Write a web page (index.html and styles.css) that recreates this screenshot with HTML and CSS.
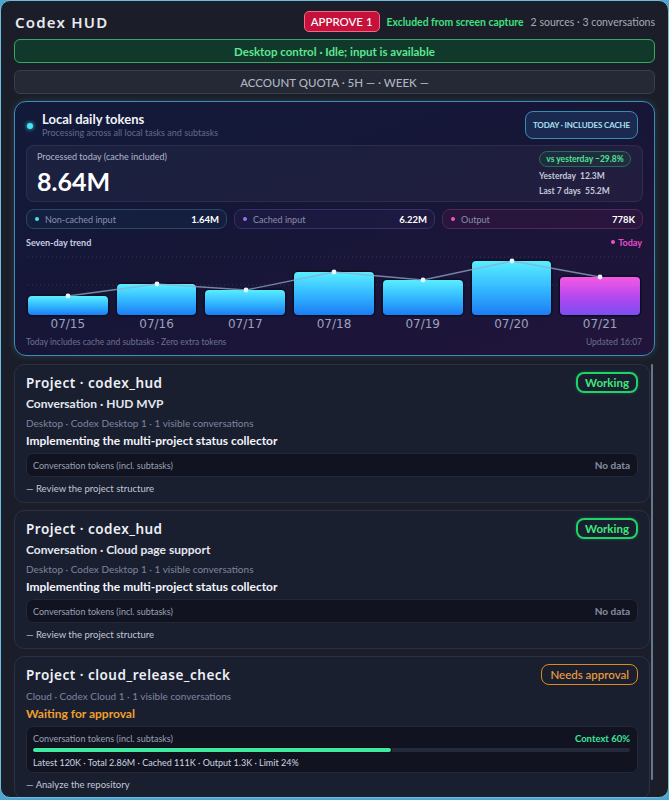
FILE: index.html
```html
<!DOCTYPE html>
<html>
<head>
<meta charset="utf-8">
<title>Codex HUD</title>
<link rel="stylesheet" href="styles.css">
</head>
<body>
<div class="window">
  <header class="top">
    <h1 class="brand">Codex HUD</h1>
    <div class="top-right">
      <span class="approve">APPROVE 1</span>
      <span class="excluded">Excluded from screen capture</span>
      <span class="sources">2 sources · 3 conversations</span>
    </div>
  </header>

  <div class="bar bar-green">Desktop control · Idle; input is available</div>
  <div class="bar bar-quota">ACCOUNT QUOTA · 5H — · WEEK —</div>

  <section class="tokens">
    <div class="tk-head">
      <span class="tk-dot"></span>
      <div class="tk-titles">
        <div class="tk-title">Local daily tokens</div>
        <div class="tk-sub">Processing across all local tasks and subtasks</div>
      </div>
      <span class="tk-badge">TODAY · INCLUDES CACHE</span>
    </div>

    <div class="tk-main">
      <div class="tk-left">
        <div class="tk-label">Processed today (cache included)</div>
        <div class="tk-big">8.64M</div>
      </div>
      <div class="tk-side">
        <span class="vs">vs yesterday −29.8%</span>
        <div class="side-line">Yesterday&nbsp; 12.3M</div>
        <div class="side-line">Last 7 days&nbsp; 55.2M</div>
      </div>
    </div>

    <div class="tk-stats">
      <div class="stat stat-cyan"><span class="sdot"></span><span class="slabel">Non-cached input</span><span class="sval">1.64M</span></div>
      <div class="stat stat-purple"><span class="sdot"></span><span class="slabel">Cached input</span><span class="sval">6.22M</span></div>
      <div class="stat stat-pink"><span class="sdot"></span><span class="slabel">Output</span><span class="sval">778K</span></div>
    </div>

    <div class="trend-row">
      <span class="trend-title">Seven-day trend</span>
      <span class="today"><span class="today-dot"></span>Today</span>
    </div>

    <div class="chart">
      <div class="bars">
        <div class="bcol"><div class="b" style="height:19px"></div></div>
        <div class="bcol"><div class="b" style="height:31px"></div></div>
        <div class="bcol"><div class="b" style="height:25px"></div></div>
        <div class="bcol"><div class="b" style="height:43px"></div></div>
        <div class="bcol"><div class="b" style="height:35px"></div></div>
        <div class="bcol"><div class="b" style="height:54px"></div></div>
        <div class="bcol"><div class="b b-today" style="height:38px"></div></div>
      </div>
      <svg class="overlay" viewBox="0 0 612 60" width="612" height="60">
        <line x1="0" y1="2" x2="612" y2="2" stroke="#ffffff" stroke-opacity="0.13" stroke-dasharray="1 3"/>
        <line x1="0" y1="30" x2="612" y2="30" stroke="#ffffff" stroke-opacity="0.13" stroke-dasharray="1 3"/>
        <polyline points="40,41 129,29 218,35 306,17 395,25 484,6 572,22" fill="none" stroke="#93a9cc" stroke-opacity="0.75" stroke-width="1.4"/>
        <g fill="#e4f8ff">
          <circle cx="40" cy="41" r="2.4"/>
          <circle cx="129" cy="29" r="2.4"/>
          <circle cx="218" cy="35" r="2.4"/>
          <circle cx="306" cy="17" r="2.4"/>
          <circle cx="395" cy="25" r="2.4"/>
          <circle cx="484" cy="6" r="2.4"/>
          <circle cx="572" cy="22" r="2.4"/>
        </g>
      </svg>
    </div>
    <div class="days">
      <span>07/15</span><span>07/16</span><span>07/17</span><span>07/18</span><span>07/19</span><span>07/20</span><span>07/21</span>
    </div>

    <div class="tk-foot">
      <span>Today includes cache and subtasks · Zero extra tokens</span>
      <span>Updated 16:07</span>
    </div>
  </section>

  <div class="list">
    <div class="cards">
      <article class="card">
        <div class="card-head">
          <h2 class="card-title">Project · codex_hud</h2>
          <span class="pill pill-working">Working</span>
        </div>
        <div class="conv">Conversation · HUD MVP</div>
        <div class="meta">Desktop · Codex Desktop 1 · 1 visible conversations</div>
        <div class="task">Implementing the multi-project status collector</div>
        <div class="tbox">
          <span class="tbox-label">Conversation tokens (incl. subtasks)</span>
          <span class="nodata">No data</span>
        </div>
        <div class="review">— Review the project structure</div>
      </article>

      <article class="card">
        <div class="card-head">
          <h2 class="card-title">Project · codex_hud</h2>
          <span class="pill pill-working">Working</span>
        </div>
        <div class="conv">Conversation · Cloud page support</div>
        <div class="meta">Desktop · Codex Desktop 1 · 1 visible conversations</div>
        <div class="task">Implementing the multi-project status collector</div>
        <div class="tbox">
          <span class="tbox-label">Conversation tokens (incl. subtasks)</span>
          <span class="nodata">No data</span>
        </div>
        <div class="review">— Review the project structure</div>
      </article>

      <article class="card">
        <div class="card-head">
          <h2 class="card-title">Project · cloud_release_check</h2>
          <span class="pill pill-approval">Needs approval</span>
        </div>
        <div class="meta">Cloud · Codex Cloud 1 · 1 visible conversations</div>
        <div class="task task-wait">Waiting for approval</div>
        <div class="tbox tbox-full">
          <div class="tbox-row">
            <span class="tbox-label">Conversation tokens (incl. subtasks)</span>
            <span class="ctx">Context 60%</span>
          </div>
          <div class="progress"><div class="progress-fill" style="width:60%"></div></div>
          <div class="tstats">Latest 120K · Total 2.86M · Cached 111K · Output 1.3K · Limit 24%</div>
        </div>
        <div class="review">— Analyze the repository</div>
      </article>
    </div>
    <div class="scrollbar"></div>
  </div>
</div>
</body>
</html>
```

FILE: styles.css
```css
* { box-sizing: border-box; margin: 0; padding: 0; }

html, body {
  width: 669px;
  height: 800px;
  overflow: hidden;
}

body {
  background: #4ea6cf;
  font-family: Lato, "Noto Sans", "DejaVu Sans", sans-serif;
  color: #e6e8f0;
}

.window {
  height: 798px;
  background: #1b1e28;
  border: 1px solid #6dbde0;
  border-radius: 10px;
  padding: 0 13px;
  display: flex;
  flex-direction: column;
  overflow: hidden;
}

/* header */
.top {
  height: 38px;
  padding-top: 3px;
  display: flex;
  align-items: center;
  justify-content: space-between;
  flex-shrink: 0;
}

.brand {
  font-family: "Noto Sans", sans-serif;
  font-size: 15px;
  font-weight: 600;
  letter-spacing: 1.2px;
  color: #e8eaf0;
  padding-left: 1px;
}

.top-right {
  display: flex;
  align-items: center;
  gap: 7px;
}

.approve {
  height: 21px;
  display: flex;
  align-items: center;
  padding: 0 6px;
  background: #c5113b;
  border: 1px solid #ef6a84;
  border-radius: 5px;
  color: #fff;
  font-size: 11.5px;
  font-weight: 500;
}

.excluded {
  color: #3fe07f;
  font-size: 10.4px;
  font-weight: 700;
}

.sources {
  color: #a7aab8;
  font-size: 10.5px;
}

/* bars */
.bar {
  height: 24px;
  flex-shrink: 0;
  border-radius: 6px;
  display: flex;
  align-items: center;
  justify-content: center;
  font-size: 11.5px;
}

.bar-green {
  background: #10392b;
  border: 1px solid #3aa766;
  color: #5fe690;
  font-weight: 700;
}

.bar-quota {
  margin-top: 7px;
  background: #252835;
  border: 1px solid #3b3e4b;
  color: #b3b5c1;
  font-weight: 500;
}

/* tokens card */
.tokens {
  margin-top: 7px;
  height: 255px;
  flex-shrink: 0;
  border: 1px solid #3d8db3;
  border-radius: 12px;
  padding: 9px 11px 7px 11px;
  background: linear-gradient(160deg, #121a3a 0%, #161637 45%, #22143b 100%);
  box-shadow: 0 0 6px rgba(70, 160, 210, 0.25);
  display: flex;
  flex-direction: column;
}

.tk-head {
  height: 28px;
  display: flex;
  align-items: center;
}

.tk-dot {
  width: 6px;
  height: 6px;
  border-radius: 50%;
  background: #46e6f2;
  box-shadow: 0 0 4px #46e6f2;
  margin-left: 1px;
  margin-right: 9px;
  margin-top: 2px;
}

.tk-titles {
  flex: 1;
  align-self: flex-start;
}

.tk-title {
  font-size: 13px;
  line-height: 16px;
  font-weight: 700;
  color: #f1f3fa;
}

.tk-sub {
  font-size: 9px;
  line-height: 12px;
  color: #646a8c;
}

.tk-badge {
  height: 28px;
  display: flex;
  align-items: center;
  padding: 0 7px;
  margin-right: 5px;
  border: 1px solid #3a8bb2;
  border-radius: 8px;
  background: rgba(40, 95, 145, 0.28);
  color: #a8e0f2;
  font-size: 8px;
  letter-spacing: -0.15px;
  font-weight: 700;
}

.tk-main {
  margin-top: 6px;
  height: 57px;
  border: 1px solid rgba(255, 255, 255, 0.07);
  background: rgba(255, 255, 255, 0.035);
  border-radius: 8px;
  padding: 5px 11px 0 10px;
  display: flex;
  justify-content: space-between;
}

.tk-label {
  font-size: 9px;
  line-height: 12px;
  color: #b3b7cc;
}

.tk-big {
  margin-top: 4px;
  font-size: 25px;
  line-height: 28px;
  font-weight: 700;
  color: #ffffff;
}

.tk-side {
  width: 92px;
  display: flex;
  flex-direction: column;
  align-items: flex-start;
}

.vs {
  width: 92px;
  height: 16px;
  display: flex;
  align-items: center;
  justify-content: center;
  border: 1px solid #2c6a58;
  border-radius: 8px;
  background: rgba(30, 80, 65, 0.3);
  color: #52e28f;
  font-size: 8.5px;
  font-weight: 700;
}

.side-line {
  font-size: 8.5px;
  line-height: 12px;
  color: #c3c7da;
  font-weight: 700;
  margin-top: 3px;
}

.tk-stats {
  margin-top: 7px;
  display: grid;
  grid-template-columns: repeat(3, 1fr);
  gap: 7px;
}

.stat {
  height: 20px;
  border: 1px solid;
  border-radius: 8px;
  padding: 0 7px 0 8px;
  display: flex;
  align-items: center;
}

.sdot {
  width: 4px;
  height: 4px;
  border-radius: 50%;
  margin-right: 6px;
}

.slabel {
  font-size: 9px;
  color: #8a8fae;
}

.sval {
  margin-left: auto;
  font-size: 9.5px;
  font-weight: 700;
  color: #ffffff;
}

.stat-cyan { border-color: #2a4866; background: rgba(20, 40, 70, 0.45); }
.stat-cyan .sdot { background: #46e2f0; }
.stat-purple { border-color: #36316a; background: rgba(38, 30, 78, 0.4); }
.stat-purple .sdot { background: #9c6cf2; }
.stat-pink { border-color: #52285a; background: rgba(68, 24, 70, 0.35); }
.stat-pink .sdot { background: #f052c6; }

.trend-row {
  margin-top: 7px;
  height: 12px;
  display: flex;
  justify-content: space-between;
  align-items: center;
  padding-right: 1px;
}

.trend-title {
  font-size: 9px;
  font-weight: 700;
  color: #c9cde2;
}

.today {
  display: flex;
  align-items: center;
  font-size: 9px;
  font-weight: 700;
  color: #e74ccf;
}

.today-dot {
  width: 4px;
  height: 4px;
  border-radius: 50%;
  background: #f052c6;
  margin-right: 3px;
}

.chart {
  position: relative;
  margin: 7px 3px 0 2px;
  height: 60px;
}

.bars {
  height: 100%;
  display: grid;
  grid-template-columns: repeat(7, 1fr);
  gap: 9px;
  align-items: end;
}

.bcol {
  height: 100%;
  display: flex;
  align-items: flex-end;
}

.b {
  width: 100%;
  border-radius: 4px;
  background: linear-gradient(180deg, #58eeff 0%, #31b4ff 55%, #1d7cf4 100%);
  box-shadow: 0 0 0 1.5px #0b0e22;
}

.b-today {
  background: linear-gradient(180deg, #f658e2 0%, #b048f0 55%, #7a4ef0 100%);
}

.overlay {
  position: absolute;
  left: 0;
  top: 0;
  width: 612px;
  height: 60px;
  overflow: visible;
}

.days {
  margin: 0 3px 0 2px;
  height: 18px;
  display: grid;
  grid-template-columns: repeat(7, 1fr);
  gap: 9px;
  align-items: center;
}

.days span {
  text-align: center;
  font-family: "DejaVu Sans", sans-serif;
  font-size: 12px;
  line-height: 18px;
  color: #9ca1bd;
}

.tk-foot {
  margin-top: 3px;
  height: 12px;
  display: flex;
  justify-content: space-between;
  align-items: center;
  font-size: 8.5px;
  color: #6b7192;
  padding-right: 1px;
}

/* list */
.list {
  margin-top: 6px;
  flex: 1;
  min-height: 0;
  display: flex;
  padding-top: 2px;
  overflow: hidden;
}

.cards {
  flex: 1;
  display: flex;
  flex-direction: column;
  gap: 7px;
}

.scrollbar {
  width: 2px;
  height: 416px;
  margin: 0 2px 0 1px;
  background: #66788f;
  border-radius: 1px;
  flex-shrink: 0;
}

.card {
  flex-shrink: 0;
  background: #1a1f30;
  border: 1px solid #2b3142;
  border-radius: 10px;
  padding: 7px 11px 7px 11px;
}

.card-head {
  height: 21px;
  display: flex;
  align-items: center;
  justify-content: space-between;
}

.card-title {
  font-family: "Noto Sans", sans-serif;
  font-size: 13.5px;
  font-weight: 600;
  letter-spacing: 0.5px;
  color: #eef0f6;
}

.pill {
  height: 21px;
  display: flex;
  align-items: center;
  border-radius: 8px;
  font-size: 11.5px;
}

.pill-working {
  padding: 0 7px;
  border: 2px solid #1fd467;
  color: #3ee87c;
  font-weight: 700;
  box-shadow: 0 0 3px rgba(31, 212, 103, 0.35);
}

.pill-approval {
  padding: 0 8px;
  border: 1.5px solid #df891d;
  color: #f0a03e;
  font-weight: 500;
}

.conv {
  margin-top: 3px;
  font-size: 12px;
  line-height: 16px;
  font-weight: 700;
  color: #e3e6ef;
}

.meta {
  margin-top: 4px;
  font-size: 10px;
  line-height: 14px;
  color: #7e859f;
}

.task {
  margin-top: 3px;
  font-size: 12px;
  line-height: 16px;
  font-weight: 700;
  color: #f2f4fa;
}

.task-wait {
  color: #f0a02e;
}

.tbox {
  margin-top: 4px;
  height: 24px;
  background: #111420;
  border: 1px solid #232838;
  border-radius: 7px;
  padding: 0 7px 0 6px;
  display: flex;
  align-items: center;
  justify-content: space-between;
}

.tbox-label {
  font-size: 9px;
  color: #9aa0b5;
}

.nodata {
  font-size: 10px;
  font-weight: 700;
  color: #878da2;
}

.tbox-full {
  height: 47px;
  display: block;
  padding: 5px 7px 0 6px;
}

.tbox-row {
  height: 12px;
  display: flex;
  align-items: center;
  justify-content: space-between;
}

.ctx {
  font-size: 9.5px;
  font-weight: 700;
  color: #3de49c;
}

.progress {
  margin-top: 4px;
  height: 4px;
  background: #252a3a;
  border-radius: 2px;
}

.progress-fill {
  height: 100%;
  background: #3deaa2;
  border-radius: 2px;
  box-shadow: 0 0 0 1px #0a0d18;
}

.tstats {
  margin-top: 5px;
  font-size: 9px;
  line-height: 12px;
  color: #d0d4e0;
}

.review {
  margin-top: 6px;
  font-size: 9.5px;
  line-height: 12px;
  color: #c3c7d3;
}
```
